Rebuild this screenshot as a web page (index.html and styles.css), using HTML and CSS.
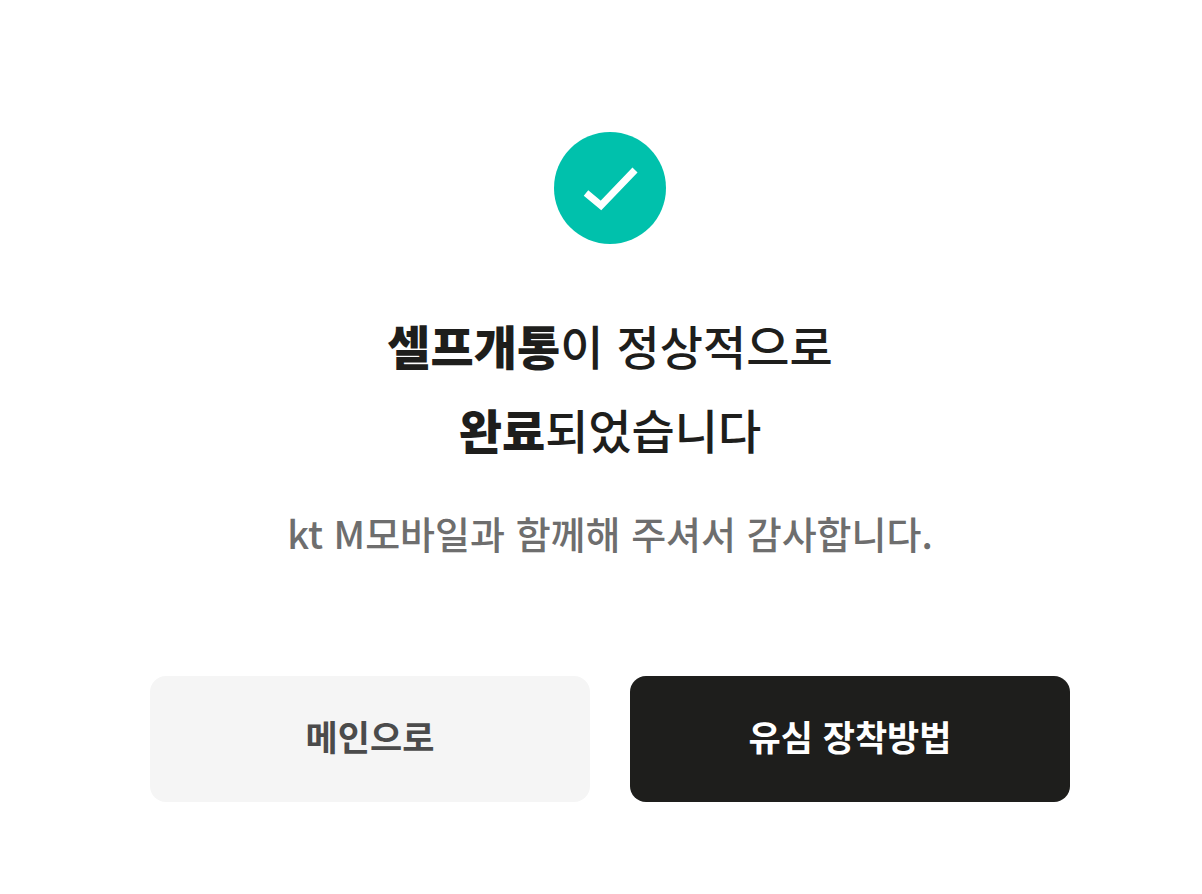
FILE: index.html
```html
<!DOCTYPE html>
<html lang="ko">
<head>
    <meta charset="UTF-8">
    <meta name="viewport" content="width=device-width, initial-scale=1.0">
    <title>셀프개통 완료</title>
    <link rel="stylesheet" href="styles.css">
</head>
<body>
    <main class="complete">
        <svg class="complete-icon" viewBox="0 0 112 112" aria-hidden="true">
            <circle cx="56" cy="56" r="56" fill="#00c1ac"/>
            <path d="M32 61 L47 73.5 L81 38" fill="none" stroke="#fff" stroke-width="7"/>
        </svg>
        <h1 class="complete-title"><strong>셀프개통</strong>이 정상적으로<br><strong>완료</strong>되었습니다</h1>
        <p class="complete-text">kt M모바일과 함께해 주셔서 감사합니다.</p>
        <div class="button-wrap">
            <button type="button" class="btn btn-gray">메인으로</button>
            <button type="button" class="btn btn-black">유심 장착방법</button>
        </div>
    </main>
</body>
</html>
```
FILE: styles.css
```css
* {
    box-sizing: border-box;
}

body {
    margin: 0;
    background: #fff;
    color: #1e1e1c;
    font-family: "Noto Sans CJK KR", sans-serif;
}

.complete {
    display: flex;
    flex-direction: column;
    align-items: center;
    padding: 132px 132px 92px 150px;
    text-align: center;
}

.complete-icon {
    width: 112px;
    height: 112px;
}

.complete-title {
    margin: 59px 0 0;
    font-size: 47px;
    font-weight: 500;
    line-height: 84px;
}

.complete-title strong {
    font-weight: 900;
}

.complete-text {
    margin: 32px 0 0;
    color: #6e6e6e;
    font-size: 38px;
    font-weight: 500;
    line-height: 60px;
}

.button-wrap {
    display: flex;
    gap: 40px;
    width: 100%;
    margin-top: 113px;
}

.btn {
    flex: 1;
    padding: 33px 20px 39px;
    border: 0;
    border-radius: 16px;
    font-family: inherit;
    font-size: 35px;
    font-weight: 700;
    line-height: 54px;
    cursor: pointer;
}

.btn-gray {
    background: #f5f5f5;
    color: #4b4b4b;
}

.btn-black {
    background: #1e1e1c;
    color: #fff;
}
```
